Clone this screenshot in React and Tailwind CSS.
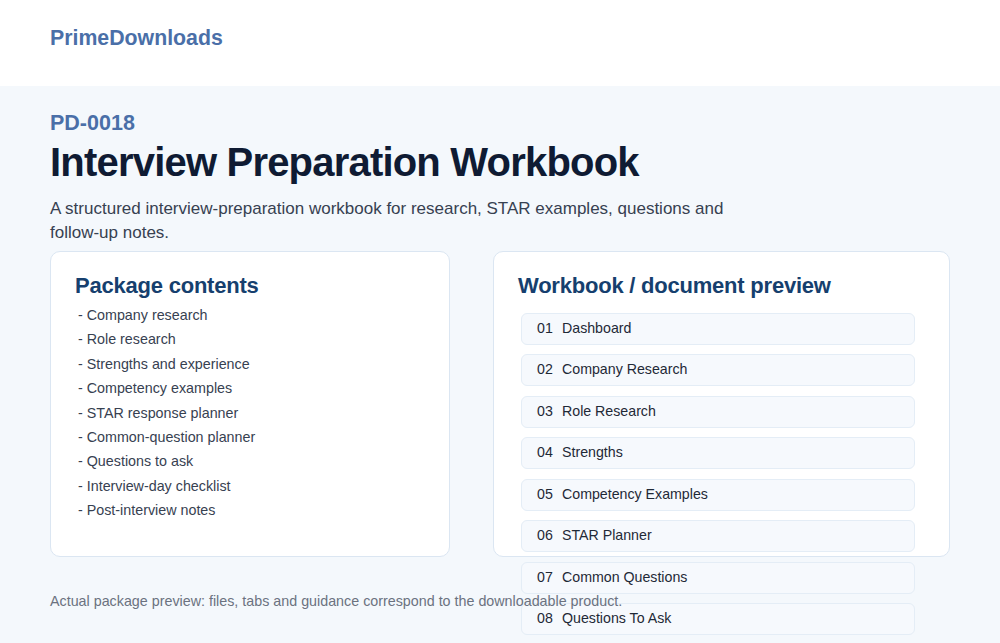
export default function App() {
  const contents = [
    "Company research",
    "Role research",
    "Strengths and experience",
    "Competency examples",
    "STAR response planner",
    "Common-question planner",
    "Questions to ask",
    "Interview-day checklist",
    "Post-interview notes",
  ];
  const sheets = [
    "Dashboard",
    "Company Research",
    "Role Research",
    "Strengths",
    "Competency Examples",
    "STAR Planner",
    "Common Questions",
    "Questions To Ask",
  ];
  return (
    <div className="min-h-[643px] bg-[#f4f8fc] font-['Liberation_Sans',Arial,sans-serif]">
      <header className="h-[86px] bg-white px-[50px] pt-[28px]">
        <div className="text-[21.3px] font-bold text-[#4a6fa8] leading-none">PrimeDownloads</div>
      </header>
      <main className="px-[50px] pt-[24px]">
        <div className="text-[21.5px] font-bold text-[#4a6fa8] leading-[26px]">PD-0018</div>
        <h1 className="mt-[2px] text-[40px] font-bold text-[#0f1b33] leading-[48px] tracking-[-0.02em]">
          Interview Preparation Workbook
        </h1>
        <p className="mt-[11px] max-w-[720px] text-[17px] leading-[24px] text-[#374151]">
          A structured interview-preparation workbook for research, STAR examples, questions and follow-up notes.
        </p>
        <div className="mt-[6px] grid grid-cols-[400px_457px] gap-[43px]">
          <section className="h-[306px] rounded-[10px] border border-[#dbe6f2] bg-white px-[24px] pt-[20px]">
            <h2 className="text-[22px] font-bold text-[#163f6e] leading-[28px] tracking-[-0.01em]">Package contents</h2>
            <ul className="mt-[3px] pl-[3px] text-[14.3px] text-[#374151] leading-[24.4px]">
              {contents.map((c) => (
                <li key={c}>- {c}</li>
              ))}
            </ul>
          </section>
          <section className="h-[306px] rounded-[10px] border border-[#dbe6f2] bg-white pl-[24px] pt-[20px]">
            <h2 className="text-[22px] font-bold text-[#163f6e] leading-[28px] tracking-[-0.01em]">
              Workbook / document preview
            </h2>
            <div className="mt-[12.5px] ml-[3px] flex w-[394px] flex-col gap-[9.5px]">
              {sheets.map((s, i) => (
                <div
                  key={s}
                  className="h-[32px] rounded-[6px] border border-[#e4edf6] bg-[#f6f9fd] pl-[15px] flex items-center text-[14.2px] text-[#1f2937]"
                >
                  <span className="w-[25px]">{String(i + 1).padStart(2, "0")}</span>
                  <span>{s}</span>
                </div>
              ))}
            </div>
          </section>
        </div>
        <p className="mt-[34px] text-[14.3px] leading-[20px] text-[#6b7280]">
          Actual package preview: files, tabs and guidance correspond to the downloadable product.
        </p>
      </main>
    </div>
  );
}
